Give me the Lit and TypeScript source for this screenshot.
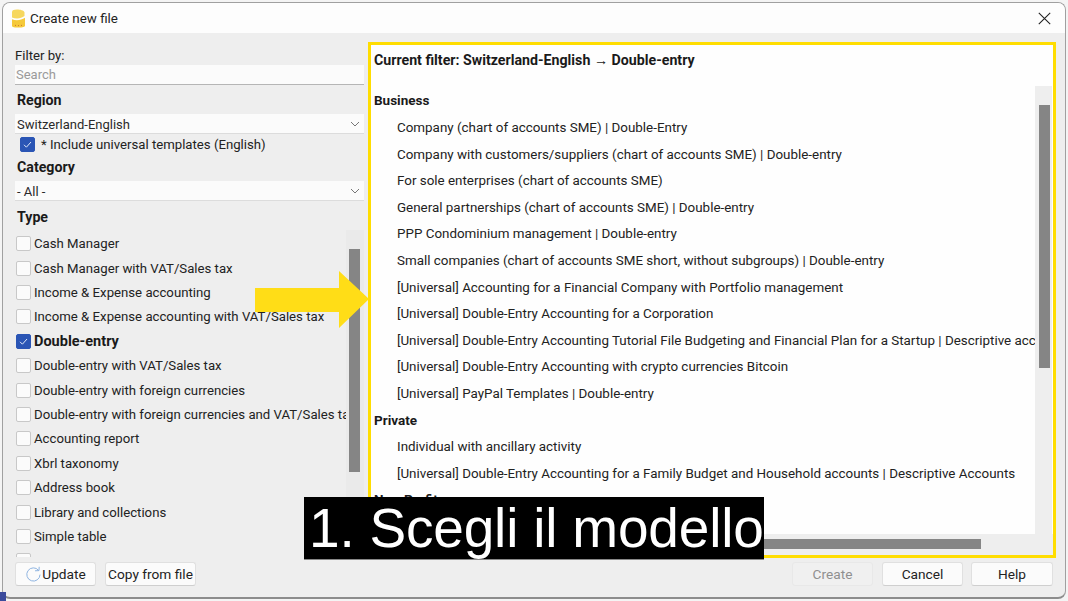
import { LitElement, html, css, svg } from "lit";
import { customElement } from "lit/decorators.js";

const types = [
  ["Cash Manager", false],
  ["Cash Manager with VAT/Sales tax", false],
  ["Income & Expense accounting", false],
  ["Income & Expense accounting with VAT/Sales tax", false],
  ["Double-entry", true],
  ["Double-entry with VAT/Sales tax", false],
  ["Double-entry with foreign currencies", false],
  ["Double-entry with foreign currencies and VAT/Sales tax", false],
  ["Accounting report", false],
  ["Xbrl taxonomy", false],
  ["Address book", false],
  ["Library and collections", false],
  ["Simple table", false],
  ["", false],
] as [string, boolean][];

const groups: [string, string[]][] = [
  ["Business", [
    "Company (chart of accounts SME) | Double-Entry",
    "Company with customers/suppliers (chart of accounts SME) | Double-entry",
    "For sole enterprises (chart of accounts SME)",
    "General partnerships (chart of accounts SME) | Double-entry",
    "PPP Condominium management | Double-entry",
    "Small companies (chart of accounts SME short, without subgroups) | Double-entry",
    "[Universal] Accounting for a Financial Company with Portfolio management",
    "[Universal] Double-Entry Accounting for a Corporation",
    "[Universal] Double-Entry Accounting Tutorial File Budgeting and Financial Plan for a Startup | Descriptive accounts",
    "[Universal] Double-Entry Accounting with crypto currencies Bitcoin",
    "[Universal] PayPal Templates | Double-entry",
  ]],
  ["Private", [
    "Individual with ancillary activity",
    "[Universal] Double-Entry Accounting for a Family Budget and Household accounts | Descriptive Accounts",
  ]],
  ["Non-Profit", []],
];

const check = svg`<svg class="tick" viewBox="0 0 15 15" width="15" height="15"><path d="M4 7.8 L6.4 10.2 L11 5" fill="none" stroke="#dfe8fa" stroke-width="1"/></svg>`;
const chevron = svg`<svg class="chev" viewBox="0 0 10 6" width="10" height="6"><path d="M1 1 L5 5 L9 1" fill="none" stroke="#777" stroke-width="1"/></svg>`;

@customElement("app-root")
export class AppRoot extends LitElement {
  static styles = css`
    :host { display: block; width: 1068px; height: 601px; background: #f4f4f4; overflow: hidden; position: relative;
      font-family: Roboto, "Noto Sans", sans-serif; font-size: 13.4px; color: #222; }
    .window { box-sizing: border-box; margin: 2px 2px 0 2px; height: 597px; border: 1px solid #a0a0a0; border-bottom: 2px solid #8c8c8c;
      border-radius: 8px; background: #eeeeee; display: flex; flex-direction: column; overflow: hidden; }
    .title { height: 30px; flex: none; background: #fdfdfd; display: flex; align-items: center; padding: 0 14px 0 8px; gap: 5px; }
    .title .t { flex: 1; }
    .main { flex: 1; min-height: 0; display: flex; padding: 9px 0 0 12px; gap: 4px; }
    .left { width: 349px; flex: none; height: 515px; display: flex; flex-direction: column; font-size: 13.2px; }
    .filter { margin-top: 4px; height: 19px; line-height: 19px; }
    .search { height: 20px; box-sizing: border-box; background: #fbfbfb; border-bottom: 1px solid #b5b5b5; line-height: 19px; padding-left: 1px; color: #9a9a9a; font-size: 13px; }
    .lab { font-weight: 700; font-size: 14.2px; margin-left: 2px; line-height: 18px; height: 18px; color: #1a1a1a; }
    .lab.region { margin-top: 6px; }
    .lab.cat { margin-top: 4px; }
    .lab.typ { margin-top: 7px; }
    .sel { height: 20px; box-sizing: border-box; background: #fbfbfb; border-bottom: 1px solid #dcdcdc; display: flex; align-items: center; justify-content: space-between; padding: 1px 4px 0 2px; color: #2a2a2a; font-size: 13px; }
    .sel.a { margin-top: 5px; }
    .sel.b { margin-top: 5px; }
    .chev { flex: none; }
    .inc { display: flex; align-items: center; gap: 6px; height: 20px; margin-left: 5px; }
    .box { width: 15px; height: 15px; flex: none; box-sizing: border-box; border: 1px solid #c8c8c8; border-radius: 2px; background: #fbfbfb; display: block; }
    .box.on { background: #2a55b5; border-color: #2a55b5; }
    .tick { display: block; margin: -1px; }
    .types { flex: 1; min-height: 0; display: flex; margin-top: 4px; }
    .rows { width: 331px; flex: none; overflow: hidden; padding-top: 1.6px; }
    .row { height: 24.4px; display: flex; align-items: center; gap: 3px; margin-left: 1px; white-space: nowrap; }
    .row b { font-weight: 700; font-size: 14.5px; color: #1a1a1a; }
    .vbar { flex: 1; background: #eaeaea; padding: 19px 3px 0 3px; box-sizing: border-box; }
    .vbar i { display: block; width: 11px; height: 223px; background: #858585; }
    .panel { width: 688px; height: 516px; flex: none; box-sizing: border-box; border: 3px solid #ffdd00; background: #fefefe; display: flex; flex-direction: column; padding: 0 0 0 3px; }
    .cur { height: 41px; flex: none; font-weight: 700; font-size: 14.2px; color: #1a1a1a; line-height: 30px; }
    .lists { flex: 1; min-height: 0; display: flex; flex-direction: column; }
    .top { flex: 1; min-height: 0; display: flex; }
    .tree { flex: 1; min-width: 0; overflow: hidden; padding-top: 1.4px; }
    .g { height: 26.6px; line-height: 26.6px; font-weight: 700; font-size: 13.5px; color: #1a1a1a; white-space: nowrap; }
    .i { height: 26.6px; line-height: 28px; padding-left: 23px; white-space: nowrap; }
    .rbar { width: 17px; flex: none; background: #eeeeee; padding: 19px 3px 0 4px; box-sizing: border-box; margin-right: 1px; }
    .rbar i { display: block; width: 11px; height: 263px; background: #858585; }
    .hbar { height: 21px; flex: none; background: #eeeeee; margin-left: -3px; padding-top: 5px; box-sizing: border-box; }
    .hbar i { display: block; width: 610px; height: 10px; background: #858585; }
    .foot { height: 35px; flex: none; display: flex; align-items: flex-start; padding: 0 12px; gap: 9px; font-size: 13.7px; }
    .btn { height: 24px; box-sizing: border-box; background: #fbfbfb; border: 1px solid #e0e0e0; border-bottom-color: #cfcfcf; border-radius: 3px; display: flex; align-items: center; justify-content: center; width: 81px; color: #222; }
    .btn.copy { width: 91px; }
    .btn.cancel { margin-right: -1px; }
    .btn.help { width: 82px; }
    .btn.dis { background: #f0f0f0; color: #8f8f8f; border-color: #e8e8e8; }
    .spacer { flex: 1; }
    .arrow { position: absolute; left: 255px; top: 270px; display: block; }
    .caption { position: absolute; left: 304px; top: 497px; width: 460px; height: 63px; box-sizing: border-box; background: #000; border-bottom: 1px solid #888;
      color: #fff; font-family: "Liberation Sans", Arial, sans-serif; font-size: 55px; letter-spacing: -0.2px; line-height: 62px; padding: 0 0 0 5px; white-space: nowrap; }
    .corner { position: absolute; left: 0; top: 592px; width: 6px; height: 9px; background: #3a4a9c; }
  `;

  render() {
    return html`
      <div class="window">
        <div class="title">
          <svg viewBox="0 0 14 19" width="14" height="19">
            <path d="M1 3 C1 1.4 3 .6 6 .6 C9 .6 13 1.4 13.5 3.5 V7 C10 9.8 5 10.2 1 8.4 Z" fill="#f6d75e"/>
            <path d="M1 10.2 C5 12 10 11.4 14 8.8 V16.5 C14 18 12 18.6 7 18.6 C2 18.6 1 18 1 16.5 Z" fill="#f5c93a"/>
            <path d="M4 16.4 h.9 M7 16.6 h.9 M10 16.4 h.9" stroke="#c8602a" stroke-width=".9"/>
          </svg>
          <span class="t">Create new file</span>
          <svg viewBox="0 0 13 13" width="13" height="13"><path d="M.8 .8 L12.2 12.2 M12.2 .8 L.8 12.2" stroke="#222" stroke-width="1.1" fill="none"/></svg>
        </div>
        <div class="main">
          <div class="left">
            <div class="filter">Filter by:</div>
            <div class="search">Search</div>
            <div class="lab region">Region</div>
            <div class="sel a"><span>Switzerland-English</span>${chevron}</div>
            <div class="inc"><span class="box on">${check}</span><span>* Include universal templates (English)</span></div>
            <div class="lab cat">Category</div>
            <div class="sel b"><span>- All -</span>${chevron}</div>
            <div class="lab typ">Type</div>
            <div class="types">
              <div class="rows">
                ${types.map(([t, on]) => html`<div class="row"><span class="box ${on ? "on" : ""}">${on ? check : ""}</span>${on ? html`<b>${t}</b>` : html`<span>${t}</span>`}</div>`)}
              </div>
              <div class="vbar"><i></i></div>
            </div>
          </div>
          <div class="panel">
            <div class="cur">Current filter: Switzerland-English → Double-entry</div>
            <div class="lists">
              <div class="top">
                <div class="tree">
                  ${groups.map(([g, items]) => html`<div class="g">${g}</div>${items.map((i) => html`<div class="i">${i}</div>`)}`)}
                </div>
                <div class="rbar"><i></i></div>
              </div>
              <div class="hbar"><i></i></div>
            </div>
          </div>
        </div>
        <div class="foot">
          <div class="btn up">
            <svg viewBox="0 0 17 17" width="17" height="17"><path d="M13.6 4.4 A6.6 6.6 0 1 0 15 8.6" fill="none" stroke="#8fb4e0" stroke-width="1"/><path d="M10 4.8 L14 4.6 L14.2 .8" fill="none" stroke="#8fb4e0" stroke-width="1"/></svg>
            <span>Update</span>
          </div>
          <div class="btn copy">Copy from file</div>
          <div class="spacer"></div>
          <div class="btn dis">Create</div>
          <div class="btn cancel">Cancel</div>
          <div class="btn help">Help</div>
        </div>
      </div>
      <svg class="arrow" viewBox="0 0 115 60" width="115" height="60"><polygon points="0,18 84,18 84,1 114,29 84,58 84,42 0,42" fill="#ffdd17"/></svg>
      <div class="caption">1. Scegli il modello</div>
      <div class="corner"></div>
    `;
  }
}
